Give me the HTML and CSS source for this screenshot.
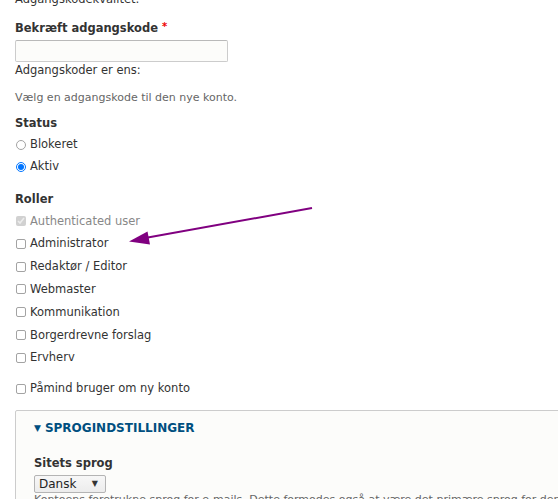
FILE: index.html
```html
<!DOCTYPE html>
<html lang="da">
<head>
<meta charset="utf-8">
<title>Bruger</title>
<link rel="stylesheet" href="styles.css">
</head>
<body>
<div class="page">
  <div class="prev">Adgangskodekvalitet:</div>

  <div class="confirm">
    <label class="lbl" for="pw2">Bekræft adgangskode<span class="req">*</span></label>
    <input class="text" id="pw2" type="password">
    <div class="match">Adgangskoder er ens:</div>
  </div>

  <div class="desc d1">Vælg en adgangskode til den nye konto.</div>

  <div class="status">
    <div class="lbl">Status</div>
    <div class="opts">
      <label class="opt"><input type="radio" name="status">Blokeret</label>
      <label class="opt"><input type="radio" name="status" checked>Aktiv</label>
    </div>
  </div>

  <div class="roles">
    <div class="lbl">Roller</div>
    <div class="opts">
      <label class="opt disabled"><input type="checkbox" checked disabled>Authenticated user</label>
      <label class="opt"><input type="checkbox">Administrator</label>
      <label class="opt"><input type="checkbox">Redaktør / Editor</label>
      <label class="opt"><input type="checkbox">Webmaster</label>
      <label class="opt"><input type="checkbox">Kommunikation</label>
      <label class="opt"><input type="checkbox">Borgerdrevne forslag</label>
      <label class="opt"><input type="checkbox">Ervherv</label>
    </div>
  </div>

  <label class="opt notify"><input type="checkbox">Påmind bruger om ny konto</label>

  <div class="fs">
    <div class="legend"><span class="tri">▼</span>Sprogindstillinger</div>
    <div class="lang">
      <label class="lbl" for="lang">Sitets sprog</label>
      <span class="sel">
        <select id="lang"><option>Dansk</option></select>
        <span class="arrow">▼</span>
      </span>
      <div class="desc d2">Kontoens foretrukne sprog for e-mails. Dette formodes også at være det primære sprog for denne konto på sitet.</div>
    </div>
  </div>
</div>

<svg class="annot" width="558" height="499" viewBox="0 0 558 499" aria-hidden="true">
  <line x1="312" y1="208" x2="145" y2="238" stroke="#800080" stroke-width="2"/>
  <polygon points="129,241.5 147.5,231.5 150,244.5" fill="#800080"/>
</svg>
</body>
</html>
```

FILE: styles.css
```css
html, body {
  margin: 0;
  padding: 0;
  overflow: hidden;
  background: #fff;
}
body {
  position: relative;
  width: 558px;
  height: 499px;
  font-family: "DejaVu Sans", "Verdana", sans-serif;
  font-size: 11.5px;
  line-height: 17px;
  color: #333;
}
.page {
  padding-left: 15px;
}
.prev {
  margin-top: -9px;
}
.confirm {
  margin-top: 10px;
}
.lbl {
  display: block;
  font-weight: bold;
  color: #333;
}
.req {
  color: #e00;
  margin-left: 4px;
  font-size: 10px;
  vertical-align: 2px;
}
.text {
  display: block;
  box-sizing: border-box;
  margin: 3px 0 0;
  width: 213px;
  height: 22px;
  border: 1px solid #ccc;
  border-top-color: #b9b9b9;
  border-radius: 2px;
  background: #fcfcfa;
  padding: 0 4px;
}
.desc {
  font-size: 11px;
  line-height: 15px;
  color: #666;
}
.d1 {
  margin-top: 11px;
}
.status {
  margin-top: 10px;
}
.opts {
  display: flex;
  flex-direction: column;
  align-items: flex-start;
}
.status .opts {
  margin-top: 4px;
  gap: 5px;
}
.roles {
  margin-top: 16px;
}
.roles .opts {
  margin-top: 4.5px;
  gap: 5.83px;
}
.opt {
  display: flex;
  align-items: center;
  height: 17px;
  color: #333;
}
.opt input {
  width: 10px;
  height: 10px;
  margin: 0 4px 0 1px;
  flex: none;
}
.opt input[type="checkbox"]:not(:checked) {
  -webkit-appearance: none;
  appearance: none;
  box-sizing: border-box;
  width: 10px;
  height: 10px;
  border: 1px solid #a3a3a3;
  border-radius: 2px;
  background: #fff;
}
.opt input[type="radio"]:not(:checked) {
  -webkit-appearance: none;
  appearance: none;
  box-sizing: border-box;
  width: 10px;
  height: 10px;
  border: 1px solid #a3a3a3;
  border-radius: 50%;
  background: #fff;
}
.opt.disabled {
  color: #888;
}
.notify {
  margin-top: 14px;
  width: max-content;
}
.fs {
  margin-top: 12.5px;
  width: 640px;
  height: 140px;
  box-sizing: border-box;
  border: 1px solid #ccc;
  border-radius: 2px;
  background: #fcfcfa;
  padding: 9.5px 18px 0;
}
.legend {
  display: flex;
  align-items: center;
  font-size: 12px;
  font-weight: bold;
  text-transform: uppercase;
  color: #004f80;
  height: 17px;
}
.tri {
  font-size: 9px;
  margin-right: 4px;
}
.lang {
  margin-top: 18px;
}
.sel {
  position: relative;
  display: inline-block;
  margin-top: 2.5px;
  vertical-align: top;
}
.sel select {
  display: block;
  -webkit-appearance: none;
  appearance: none;
  box-sizing: border-box;
  width: 72px;
  height: 18px;
  margin: 0;
  padding: 0 0 0 4px;
  border: 1px solid #b4b4b4;
  border-radius: 2px;
  background: linear-gradient(#f7f7f7, #ececec);
  font-family: "DejaVu Sans", sans-serif;
  font-size: 12px;
  line-height: 16px;
  color: #222;
}
.arrow {
  position: absolute;
  right: 8px;
  top: 4px;
  font-size: 8px;
  line-height: 10px;
  color: #333;
  pointer-events: none;
}
.d2 {
  margin-top: -1px;
  white-space: nowrap;
}
.annot {
  position: absolute;
  top: 0;
  left: 0;
  pointer-events: none;
}
```
